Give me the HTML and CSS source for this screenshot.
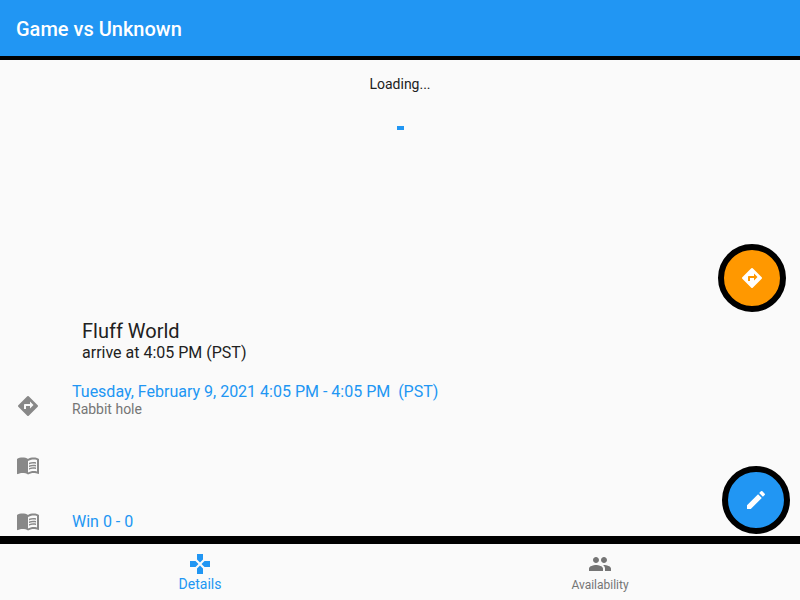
FILE: index.html
```
<!DOCTYPE html>
<html lang="en">
<head>
<meta charset="utf-8">
<meta name="viewport" content="width=device-width, initial-scale=1">
<title>Game vs Unknown</title>
<link rel="stylesheet" href="styles.css">
</head>
<body>
<svg class="defs" aria-hidden="true">
  <symbol id="directions" viewBox="0 0 24 24"><path d="M21.71 11.29l-9-9a1 1 0 0 0-1.41 0l-9 9a1 1 0 0 0 0 1.41l9 9c.39.39 1.02.39 1.41 0l9-9a1 1 0 0 0 0-1.41zM14 14.5V12h-4v3H8v-4c0-.55.45-1 1-1h5V7.500l3.500 3.500-3.500 3.500z"/></symbol>
  <symbol id="book" viewBox="0 1 24 24"><path d="M21 5c-1.110-.35-2.330-.5-3.500-.5-1.950 0-4.050.4-5.500 1.500-1.450-1.100-3.550-1.500-5.500-1.500S2.450 4.900 1 6v14.650c0 .25.25.5.5.5.1 0 .15-.05.25-.05C3.100 20.450 5.050 20 6.500 20c1.950 0 4.050.4 5.500 1.500 1.350-.85 3.800-1.500 5.500-1.500 1.650 0 3.350.3 4.750 1.050.1.05.15.05.25.05.25 0 .5-.25.5-.5V6c-.6-.45-1.250-.75-2-1zm0 13.500c-1.100-.35-2.300-.5-3.500-.5-1.700 0-4.150.65-5.500 1.500V8c1.350-.85 3.800-1.500 5.500-1.500 1.200 0 2.400.15 3.500.5v11.500z"/><path d="M17.500 10.500c.88 0 1.730.09 2.500.26V9.240c-.79-.15-1.640-.24-2.500-.24-1.700 0-3.240.29-4.500.83v1.660c1.130-.64 2.700-.99 4.500-.99zM13 12.490v1.660c1.130-.64 2.700-.99 4.500-.99.88 0 1.730.09 2.500.26V11.900c-.79-.15-1.640-.24-2.500-.24-1.700 0-3.240.3-4.500.83zM17.500 14.330c-1.700 0-3.240.29-4.500.83v1.660c1.130-.64 2.700-.99 4.500-.99.88 0 1.730.09 2.500.26v-1.520c-.79-.16-1.640-.24-2.500-.24z"/></symbol>
  <symbol id="edit" viewBox="0 0 24 24"><path d="M3 17.250V21h3.750L17.810 9.940l-3.750-3.750L3 17.250zM20.710 7.040a1 1 0 0 0 0-1.410l-2.340-2.340a1 1 0 0 0-1.410 0l-1.830 1.830 3.750 3.750 1.830-1.830z"/></symbol>
  <symbol id="gamepad" viewBox="0 0 24 24"><path d="M15 7.500V2H9v5.500l3 3 3-3zM7.500 9H2v6h5.500l3-3-3-3zM9 16.500V22h6v-5.500l-3-3-3 3zM16.500 9l-3 3 3 3H22V9h-5.500z"/></symbol>
  <symbol id="people" viewBox="0 0 24 24"><path d="M16 11c1.660 0 2.990-1.340 2.990-3S17.660 5 16 5s-3 1.340-3 3 1.340 3 3 3zm-8 0c1.660 0 2.990-1.340 2.990-3S9.660 5 8 5 5 6.340 5 8s1.340 3 3 3zm0 2c-2.330 0-7 1.170-7 3.500V19h14v-2.500c0-2.330-4.670-3.500-7-3.500zm8 0c-.29 0-.62.02-.97.05 1.160.84 1.970 1.970 1.970 3.450V19h6v-2.500c0-2.330-4.670-3.500-7-3.500z"/></symbol>
</svg>
<header class="app-bar"><h1>Game vs Unknown</h1></header>
<main class="content">
  <section class="loading" role="status">
    <p>Loading...</p>
    <div class="spinner"></div>
  </section>
  <section class="place">
    <h2>Fluff World</h2>
    <p>arrive at 4:05 PM (PST)</p>
  </section>
  <ul class="tiles">
    <li class="tile tile-tall">
      <svg class="icon"><use href="#directions"/></svg>
      <div class="tile-text">
        <p class="tile-title">Tuesday, February 9, 2021 4:05 PM - 4:05 PM&nbsp; (PST)</p>
        <p class="tile-sub">Rabbit hole</p>
      </div>
    </li>
    <li class="tile"><svg class="icon"><use href="#book"/></svg></li>
    <li class="tile">
      <svg class="icon"><use href="#book"/></svg>
      <p class="tile-title">Win 0 - 0</p>
    </li>
  </ul>
  <button class="fab fab-directions" type="button" aria-label="Directions"><svg class="icon"><use href="#directions"/></svg></button>
  <button class="fab fab-edit" type="button" aria-label="Edit"><svg class="icon"><use href="#edit"/></svg></button>
</main>
<nav class="bottom-nav">
  <a class="active" href="#details" aria-current="page"><svg class="icon"><use href="#gamepad"/></svg><span>Details</span></a>
  <a href="#availability"><svg class="icon"><use href="#people"/></svg><span>Availability</span></a>
</nav>
</body>
</html>
```
FILE: styles.css
```
* {
  box-sizing: border-box;
  margin: 0;
  padding: 0;
}

body {
  display: flex;
  flex-direction: column;
  height: 100vh;
  background: #fafafa;
  color: #212121;
  font-family: Roboto, sans-serif;
  font-size: 14px;
  line-height: 16px;
}

.defs {
  position: absolute;
  width: 0;
  height: 0;
}

.icon {
  flex: none;
  width: 24px;
  height: 24px;
  fill: currentColor;
}

.app-bar {
  flex: none;
  padding: 17px 16px 15px;
  border-bottom: 4px solid #000;
  background: #2196f3;
  color: #fff;
}

.app-bar h1 {
  font-size: 20px;
  font-weight: 500;
  line-height: 24px;
}

.content {
  position: relative;
  flex: 1;
  min-height: 0;
  overflow: hidden;
}

.loading {
  display: flex;
  flex-direction: column;
  align-items: center;
  gap: 34px;
  height: 259px;
  padding-top: 16px;
}

.spinner {
  width: 7px;
  height: 4px;
  background: #2196f3;
}

.place {
  padding: 0 82px;
}

.place h2 {
  font-size: 20px;
  font-weight: 400;
  line-height: 24px;
}

.place p {
  font-size: 16px;
  line-height: 20px;
}

.tiles {
  padding-top: 11px;
  list-style: none;
}

.tile {
  display: flex;
  align-items: center;
  gap: 32px;
  height: 56px;
  padding: 0 16px;
  color: #888;
}

.tile-tall {
  height: 64px;
}

.tile-text {
  align-self: flex-start;
  padding-top: 9px;
}

.tile-title {
  color: #2196f3;
  font-size: 16px;
  line-height: 18px;
}

.tile-sub {
  color: #757575;
}

.fab {
  position: absolute;
  display: flex;
  align-items: center;
  justify-content: center;
  width: 68px;
  height: 68px;
  border: 6px solid #000;
  border-radius: 50%;
  color: #fff;
}

.fab-directions {
  top: 184px;
  right: 14px;
  background: #ff9800;
}

.fab-edit {
  right: 10px;
  bottom: 2px;
  background: #2196f3;
}

.bottom-nav {
  display: flex;
  flex: none;
  border-top: 8px solid #000;
}

.bottom-nav a {
  display: flex;
  flex: 1;
  flex-direction: column;
  align-items: center;
  height: 56px;
  padding-top: 8px;
  color: #757575;
  font-size: 12px;
  line-height: 18px;
  text-decoration: none;
}

.bottom-nav .active {
  color: #2196f3;
  font-size: 14px;
  line-height: 16px;
}
```
